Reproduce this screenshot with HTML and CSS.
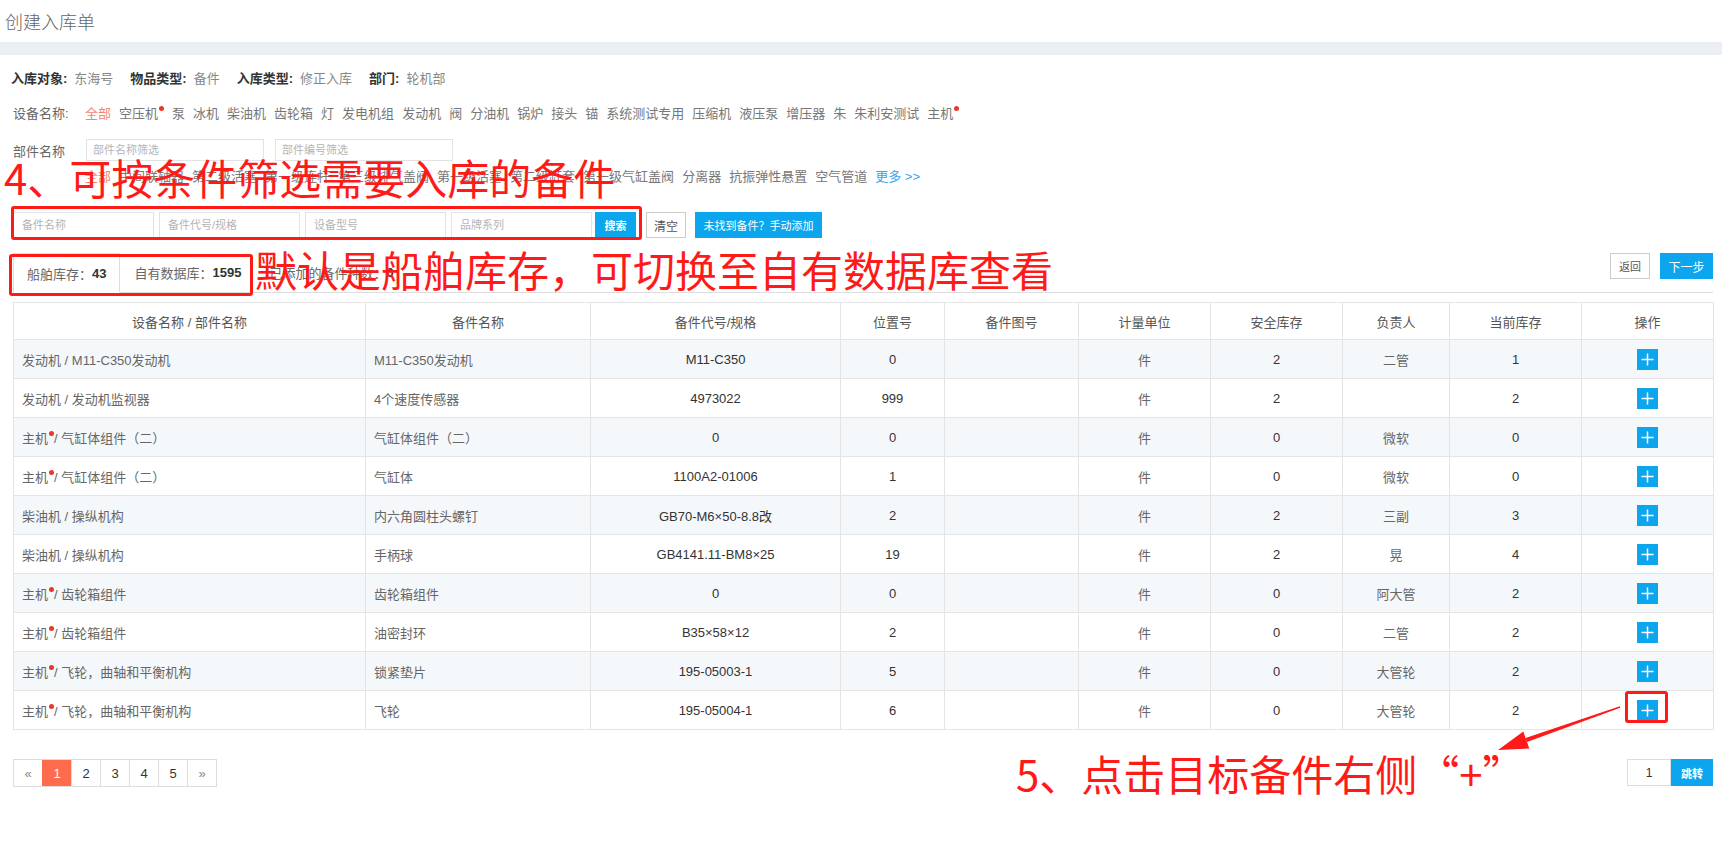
FILE: index.html
```html
<!DOCTYPE html>
<html lang="zh-CN">
<head>
<meta charset="utf-8">
<title>创建入库单</title>
<link rel="stylesheet" href="styles.css">
</head>
<body>
<div class="title">创建入库单</div>
<div class="band"></div>
<div class="content">
  <div class="info">
    <span class="lbl">入库对象:</span><span class="val">东海号</span>
    <span class="lbl">物品类型:</span><span class="val">备件</span>
    <span class="lbl">入库类型:</span><span class="val">修正入库</span>
    <span class="lbl">部门:</span><span class="val">轮机部</span>
  </div>
  <div class="filter devices">
    <span class="flabel">设备名称:</span>
    <span class="opt active">全部</span>
    <span class="opt">空压机<i class="dot"></i></span>
    <span class="opt">泵</span>
    <span class="opt">冰机</span>
    <span class="opt">柴油机</span>
    <span class="opt">齿轮箱</span>
    <span class="opt">灯</span>
    <span class="opt">发电机组</span>
    <span class="opt">发动机</span>
    <span class="opt">阀</span>
    <span class="opt">分油机</span>
    <span class="opt">锅炉</span>
    <span class="opt">接头</span>
    <span class="opt">锚</span>
    <span class="opt">系统测试专用</span>
    <span class="opt">压缩机</span>
    <span class="opt">液压泵</span>
    <span class="opt">增压器</span>
    <span class="opt">朱</span>
    <span class="opt">朱利安测试</span>
    <span class="opt">主机<i class="dot"></i></span>
  </div>
  <div class="parts">
    <span class="plabel">部件名称</span>
    <input class="pinput" placeholder="部件名称筛选">
    <input class="pinput" placeholder="部件编号筛选">
  </div>
  <div class="filter subs">
    <span class="opt active">全部</span>
    <span class="opt">中间联轴器</span>
    <span class="opt">第二级活塞</span>
    <span class="opt">第一级连杆</span>
    <span class="opt">第三级排气盖阀</span>
    <span class="opt">第一级活塞</span>
    <span class="opt">第二级缸套</span>
    <span class="opt">第一级气缸盖阀</span>
    <span class="opt">分离器</span>
    <span class="opt">抗振弹性悬置</span>
    <span class="opt">空气管道</span>
    <span class="more">更多 &gt;&gt;</span>
  </div>
  <div class="search">
    <input class="sinput" placeholder="备件名称">
    <input class="sinput" placeholder="备件代号/规格">
    <input class="sinput" placeholder="设备型号">
    <input class="sinput last" placeholder="品牌系列">
    <button class="btn blue sbtn">搜索</button>
    <button class="btn plain cbtn">清空</button>
    <button class="btn blue abtn">未找到备件？手动添加</button>
  </div>
  <div class="tabbar">
    <div class="tab active">船舶库存：<b>43</b></div>
    <div class="tab">自有数据库：<b>1595</b></div>
    <div class="tab">已添加的备件种数：<b>0</b></div>
    <div class="tabfill">
      <button class="btn plain back">返回</button>
      <button class="btn blue next">下一步</button>
    </div>
  </div>
  <table class="grid">
    <colgroup>
      <col style="width:352px"><col style="width:225px"><col style="width:250px"><col style="width:104px"><col style="width:134px"><col style="width:132px"><col style="width:132px"><col style="width:107px"><col style="width:132px"><col style="width:132px">
    </colgroup>
    <thead>
      <tr><th>设备名称 / 部件名称</th><th>备件名称</th><th>备件代号/规格</th><th>位置号</th><th>备件图号</th><th>计量单位</th><th>安全库存</th><th>负责人</th><th>当前库存</th><th>操作</th></tr>
    </thead>
    <tbody>
      <tr><td>发动机 / M11-C350发动机</td><td>M11-C350发动机</td><td>M11-C350</td><td>0</td><td></td><td>件</td><td>2</td><td>二管</td><td>1</td><td><span class="plus"><svg width="21" height="21" viewBox="0 0 21 21"><path d="M10.5 4.5v12M4.5 10.5h12" stroke="#fff" stroke-width="1.5"/></svg></span></td></tr>
      <tr><td>发动机 / 发动机监视器</td><td>4个速度传感器</td><td>4973022</td><td>999</td><td></td><td>件</td><td>2</td><td></td><td>2</td><td><span class="plus"><svg width="21" height="21" viewBox="0 0 21 21"><path d="M10.5 4.5v12M4.5 10.5h12" stroke="#fff" stroke-width="1.5"/></svg></span></td></tr>
      <tr><td>主机<i class="dot"></i>/ 气缸体组件（二）</td><td>气缸体组件（二）</td><td>0</td><td>0</td><td></td><td>件</td><td>0</td><td>微软</td><td>0</td><td><span class="plus"><svg width="21" height="21" viewBox="0 0 21 21"><path d="M10.5 4.5v12M4.5 10.5h12" stroke="#fff" stroke-width="1.5"/></svg></span></td></tr>
      <tr><td>主机<i class="dot"></i>/ 气缸体组件（二）</td><td>气缸体</td><td>1100A2-01006</td><td>1</td><td></td><td>件</td><td>0</td><td>微软</td><td>0</td><td><span class="plus"><svg width="21" height="21" viewBox="0 0 21 21"><path d="M10.5 4.5v12M4.5 10.5h12" stroke="#fff" stroke-width="1.5"/></svg></span></td></tr>
      <tr><td>柴油机 / 操纵机构</td><td>内六角圆柱头螺钉</td><td>GB70-M6×50-8.8改</td><td>2</td><td></td><td>件</td><td>2</td><td>三副</td><td>3</td><td><span class="plus"><svg width="21" height="21" viewBox="0 0 21 21"><path d="M10.5 4.5v12M4.5 10.5h12" stroke="#fff" stroke-width="1.5"/></svg></span></td></tr>
      <tr><td>柴油机 / 操纵机构</td><td>手柄球</td><td>GB4141.11-BM8×25</td><td>19</td><td></td><td>件</td><td>2</td><td>晃</td><td>4</td><td><span class="plus"><svg width="21" height="21" viewBox="0 0 21 21"><path d="M10.5 4.5v12M4.5 10.5h12" stroke="#fff" stroke-width="1.5"/></svg></span></td></tr>
      <tr><td>主机<i class="dot"></i>/ 齿轮箱组件</td><td>齿轮箱组件</td><td>0</td><td>0</td><td></td><td>件</td><td>0</td><td>阿大管</td><td>2</td><td><span class="plus"><svg width="21" height="21" viewBox="0 0 21 21"><path d="M10.5 4.5v12M4.5 10.5h12" stroke="#fff" stroke-width="1.5"/></svg></span></td></tr>
      <tr><td>主机<i class="dot"></i>/ 齿轮箱组件</td><td>油密封环</td><td>B35×58×12</td><td>2</td><td></td><td>件</td><td>0</td><td>二管</td><td>2</td><td><span class="plus"><svg width="21" height="21" viewBox="0 0 21 21"><path d="M10.5 4.5v12M4.5 10.5h12" stroke="#fff" stroke-width="1.5"/></svg></span></td></tr>
      <tr><td>主机<i class="dot"></i>/ 飞轮，曲轴和平衡机构</td><td>锁紧垫片</td><td>195-05003-1</td><td>5</td><td></td><td>件</td><td>0</td><td>大管轮</td><td>2</td><td><span class="plus"><svg width="21" height="21" viewBox="0 0 21 21"><path d="M10.5 4.5v12M4.5 10.5h12" stroke="#fff" stroke-width="1.5"/></svg></span></td></tr>
      <tr><td>主机<i class="dot"></i>/ 飞轮，曲轴和平衡机构</td><td>飞轮</td><td>195-05004-1</td><td>6</td><td></td><td>件</td><td>0</td><td>大管轮</td><td>2</td><td><span class="plus"><svg width="21" height="21" viewBox="0 0 21 21"><path d="M10.5 4.5v12M4.5 10.5h12" stroke="#fff" stroke-width="1.5"/></svg></span></td></tr>
    </tbody>
  </table>
  <div class="pager">
    <div class="pages">
      <span class="pg edge">&laquo;</span>
      <span class="pg on">1</span>
      <span class="pg">2</span>
      <span class="pg">3</span>
      <span class="pg">4</span>
      <span class="pg">5</span>
      <span class="pg edge">&raquo;</span>
    </div>
    <div class="jump">
      <span class="jinput">1</span>
      <button class="btn blue jbtn">跳转</button>
    </div>
  </div>
</div>

<div class="annot">
  <div class="note n1">4、可按条件筛选需要入库的备件</div>
  <div class="note n2">默认是船舶库存，可切换至自有数据库查看</div>
  <div class="note n3">5、点击目标备件右侧“+”</div>
  <div class="rbox b1"></div>
  <div class="rbox b2"></div>
  <div class="rbox b3"></div>
  <svg class="pointer" width="1722" height="867" viewBox="0 0 1722 867">
    <polygon points="1527,741.9 1620.2,707.7 1619.8,706.3 1525.6,738.1" fill="#ff1a1a"/>
    <polygon points="1498,750 1529.3,748.5 1523.3,731.5" fill="#ff1a1a"/>
  </svg>
</div>
</body>
</html>
```

FILE: styles.css
```css
* { box-sizing: border-box; }
html, body { margin: 0; padding: 0; background: #fff; }
body {
  font-family: "Liberation Sans", "Noto Sans CJK SC", sans-serif;
  font-size: 13px;
  color: #555;
  width: 1722px;
  height: 867px;
  overflow: hidden;
  position: relative;
}
.title {
  height: 42px;
  padding-left: 5px;
  display: flex;
  align-items: center;
  font-family: "Noto Sans CJK SC", sans-serif;
  font-size: 18px;
  font-weight: 300;
  color: #666;
}
.band { height: 13px; background: #ebeff4; }
.content { padding: 0 9px 0 13px; }

.info {
  margin: 12px 0 0 -2px;
  height: 20px;
  display: flex;
  align-items: center;
  white-space: nowrap;
}
.lbl { font-weight: bold; color: #333; }
.val { color: #888; margin-left: 7px; margin-right: 17px; }

.filter { display: flex; align-items: center; height: 20px; white-space: nowrap; }
.devices { margin-top: 15px; }
.flabel { width: 72px; flex: none; color: #666; }
.opt { margin-right: 8px; color: #777; }
.opt.active { color: #f7846f; }
.more { color: #3ba4f0; }
.dot {
  display: inline-block;
  width: 5px;
  height: 5px;
  border-radius: 50%;
  background: #e8382c;
  vertical-align: top;
  margin: 3px 0 0 1px;
}

.parts { margin-top: 17px; height: 22px; display: flex; align-items: center; }
.plabel { width: 73px; flex: none; color: #666; }
.pinput {
  width: 178px;
  height: 22px;
  margin: 0 11px 0 0;
  border: 1px solid #e3e3e3;
  padding: 0 6px;
  font-family: "Liberation Sans", "Noto Sans CJK SC", sans-serif;
  font-size: 11px;
  color: #555;
  outline: none;
}
.subs { margin-top: 4px; padding-left: 72px; }

.search { margin-top: 27px; height: 26px; display: flex; align-items: center; }
.sinput {
  width: 141px;
  height: 26px;
  margin: 0 5px 0 0;
  border: 1px solid #e3e3e3;
  padding: 0 8px;
  font-family: "Liberation Sans", "Noto Sans CJK SC", sans-serif;
  font-size: 11px;
  color: #555;
  outline: none;
}
.sinput.last { margin-right: 3px; }
input::placeholder { color: #b5b5b5; }
.btn {
  height: 26px;
  padding: 0;
  margin: 0;
  border: 1px solid transparent;
  font-family: "Liberation Sans", "Noto Sans CJK SC", sans-serif;
  font-size: 11px;
  cursor: pointer;
}
.btn.blue { background: #0ba6ee; border-color: #0ba6ee; color: #fff; }
.btn.plain { background: #fff; border-color: #ccc; color: #555; }
.sbtn { width: 41px; font-weight: bold; }
.cbtn { width: 40px; margin-left: 10px; font-size: 12px; }
.abtn { width: 127px; margin-left: 9px; }

.tabbar { margin-top: 15px; height: 40px; display: flex; }
.tab {
  padding: 0 14px;
  display: flex;
  align-items: center;
  border-bottom: 1px solid #ddd;
  color: #666;
  white-space: nowrap;
}
.tab b { color: #333; }
.tab.active {
  border: 1px solid #ddd;
  border-bottom-color: #fff;
  padding: 0 13px;
}
.tabfill {
  flex: 1;
  border-bottom: 1px solid #ddd;
  display: flex;
  justify-content: flex-end;
  align-items: flex-start;
}
.back { width: 40px; color: #666; }
.next { width: 53px; margin-left: 10px; font-size: 12px; }

.grid {
  margin-top: 9px;
  width: 1700px;
  table-layout: fixed;
  border-collapse: collapse;
}
.grid th, .grid td {
  border: 1px solid #e4e4e4;
  text-align: center;
  font-weight: normal;
  padding: 0 8px;
  white-space: nowrap;
  overflow: hidden;
}
.grid th { color: #555; }
.grid td { color: #666; }
.grid thead tr { height: 37px; }
.grid tbody tr { height: 39px; }
.grid tbody tr:nth-child(odd) { background: #f5f8fb; }
.grid td:nth-child(1), .grid td:nth-child(2) { text-align: left; }
.grid td:nth-child(3), .grid td:nth-child(4), .grid td:nth-child(7), .grid td:nth-child(9) { color: #333; }
.plus {
  display: inline-flex;
  width: 21px;
  height: 21px;
  background: #0ba6ee;
  vertical-align: middle;
}

.pager {
  margin-top: 29px;
  display: flex;
  justify-content: space-between;
  align-items: flex-start;
}
.pages { display: flex; border: 1px solid #ddd; height: 28px; }
.pg {
  width: 29px;
  display: flex;
  align-items: center;
  justify-content: center;
  color: #333;
  border-left: 1px solid #ddd;
}
.pg:first-child { border-left: none; width: 28px; }
.pg.edge { color: #888; }
.pg.on { background: #ff6b4d; color: #fff; border-left-color: #ff6b4d; }
.jump { display: flex; height: 27px; }
.jinput {
  width: 44px;
  border: 1px solid #ddd;
  display: flex;
  align-items: center;
  justify-content: center;
  font-size: 12px;
  color: #333;
}
.jbtn { width: 42px; height: 27px; font-weight: bold; }

.annot {
  position: absolute;
  left: 0;
  top: 0;
  width: 1722px;
  height: 867px;
  pointer-events: none;
}
.note {
  position: absolute;
  font-family: "Noto Sans CJK SC", sans-serif;
  font-size: 42px;
  line-height: 42px;
  color: #ff1a1a;
  white-space: nowrap;
}
.n1 { left: 4px; top: 156px; }
.n2 { left: 255px; top: 248px; }
.n3 { left: 1016px; top: 752px; }
.rbox {
  position: absolute;
  border: 3px solid #ff1a1a;
  border-radius: 3px;
}
.b1 { left: 11px; top: 206px; width: 631px; height: 34px; }
.b2 { left: 9px; top: 254px; width: 244px; height: 42px; }
.b3 { left: 1625px; top: 691px; width: 43px; height: 32px; }
.pointer { position: absolute; left: 0; top: 0; }
```
